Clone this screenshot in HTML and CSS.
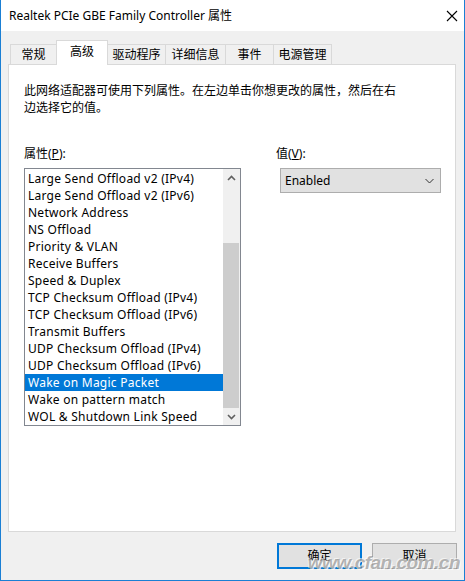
FILE: index.html
```html
<!DOCTYPE html>
<html lang="zh-CN">
<head>
<meta charset="utf-8">
<title>Realtek PCIe GBE Family Controller 属性</title>
<link rel="stylesheet" href="styles.css">
</head>
<body>
<div class="window">
  <div class="titlebar">
    <span class="title">Realtek PCIe GBE Family Controller 属性</span>
    <svg class="close" width="12" height="12" viewBox="0 0 12 12"><path d="M1 1 L11 11 M11 1 L1 11" stroke="#000" stroke-width="1.1" fill="none"/></svg>
  </div>
  <div class="body">
    <div class="tabs">
      <div class="tab w1">常规</div>
      <div class="tab w2 active">高级</div>
      <div class="tab w3">驱动程序</div>
      <div class="tab w4">详细信息</div>
      <div class="tab w5">事件</div>
      <div class="tab w6">电源管理</div>
    </div>
    <div class="panel">
      <p class="desc">此网络适配器可使用下列属性。在左边单击你想更改的属性，然后在右<br>边选择它的值。</p>
      <div class="cols">
        <div class="col-left">
          <div class="label">属性(<u>P</u>):</div>
          <div class="listbox">
            <ul class="items">
              <li>Large Send Offload v2 (IPv4)</li>
              <li>Large Send Offload v2 (IPv6)</li>
              <li>Network Address</li>
              <li>NS Offload</li>
              <li>Priority &amp; VLAN</li>
              <li>Receive Buffers</li>
              <li>Speed &amp; Duplex</li>
              <li>TCP Checksum Offload (IPv4)</li>
              <li>TCP Checksum Offload (IPv6)</li>
              <li>Transmit Buffers</li>
              <li>UDP Checksum Offload (IPv4)</li>
              <li>UDP Checksum Offload (IPv6)</li>
              <li class="sel">Wake on Magic Packet</li>
              <li>Wake on pattern match</li>
              <li>WOL &amp; Shutdown Link Speed</li>
            </ul>
            <div class="scrollbar">
              <div class="arrow">
                <svg width="9" height="6" viewBox="0 0 9 6"><path d="M1 5 L4.5 1.5 L8 5" stroke="#606060" stroke-width="1.6" fill="none"/></svg>
              </div>
              <div class="track">
                <div class="thumb"></div>
              </div>
              <div class="arrow">
                <svg width="9" height="6" viewBox="0 0 9 6"><path d="M1 1 L4.5 4.5 L8 1" stroke="#606060" stroke-width="1.6" fill="none"/></svg>
              </div>
            </div>
          </div>
        </div>
        <div class="col-right">
          <div class="label">值(<u>V</u>):</div>
          <div class="select">
            <span>Enabled</span>
            <svg width="9" height="6" viewBox="0 0 9 6"><path d="M0.5 1 L4.5 5 L8.5 1" stroke="#333" stroke-width="1" fill="none"/></svg>
          </div>
        </div>
      </div>
    </div>
    <div class="buttons">
      <div class="btn default">确定</div>
      <div class="btn">取消</div>
    </div>
    <div class="watermark">www.cfan.com.cn</div>
  </div>
</div>
</body>
</html>
```

FILE: styles.css
```css
* { box-sizing: border-box; }
html, body { margin: 0; padding: 0; }
body {
  width: 465px;
  height: 581px;
  background: #fff;
  font-family: "Noto Sans", "Noto Sans CJK SC", sans-serif;
  font-size: 12px;
  color: #000;
  overflow: hidden;
}
.window {
  width: 465px;
  height: 581px;
  display: flex;
  flex-direction: column;
  border: 1px solid #1a7fd4;
  border-top: none;
}
.titlebar {
  height: 31px;
  flex: none;
  background: #fff;
  display: flex;
  align-items: center;
  justify-content: space-between;
  padding: 0 6px 0 8px;
}
.title {
  font-size: 12px;
  line-height: 16px;
}
.close { margin-top: 1px; }
.body {
  flex: 1;
  background: #f0f0f0;
  display: flex;
  flex-direction: column;
  padding: 0 8px 0 7px;
  position: relative;
}
.tabs {
  display: flex;
  align-items: flex-end;
  margin-top: 9px;
  padding-left: 2px;
  height: 24px;
}
.tab {
  height: 20px;
  border: 1px solid #d9d9d9;
  border-bottom: none;
  margin-right: -1px;
  background: #f0f0f0;
  display: flex;
  align-items: center;
  justify-content: center;
  line-height: 16px;
  padding-top: 1px;
}
.tab.active {
  height: 25px;
  margin-bottom: -1px;
  background: #fff;
  position: relative;
  z-index: 1;
  padding-top: 0;
  padding-bottom: 3px;
}
.w1 { width: 47px; }
.w2 { width: 52px; }
.w3 { width: 59px; }
.w4 { width: 61px; }
.w5 { width: 49px; }
.w6 { width: 59px; }
.panel {
  width: 448px;
  height: 468px;
  background: #fff;
  border: 1px solid #d9d9d9;
  padding: 17px 15px 0 15px;
}
.desc {
  margin: 0;
  line-height: 17px;
  white-space: nowrap;
}
.cols {
  display: flex;
  margin-top: 29px;
}
.col-left { width: 217px; }
.col-right {
  margin-left: 35px;
}
.label {
  line-height: 17px;
  height: 17px;
  margin-bottom: 6px;
}
.label u { text-decoration-thickness: 1px; }
.listbox {
  width: 217px;
  height: 258px;
  border: 1px solid #828790;
  display: flex;
}
.items {
  list-style: none;
  margin: 0;
  padding: 1px 0 0 0;
  width: 198px;
}
.items li {
  height: 17px;
  line-height: 17px;
  padding-left: 3px;
  white-space: nowrap;
  letter-spacing: 0.25px;
}
.items li.sel {
  background: #0078d7;
  color: #fff;
}
.scrollbar {
  width: 17px;
  display: flex;
  flex-direction: column;
  background: #f0f0f0;
}
.arrow {
  height: 17px;
  display: flex;
  align-items: center;
  justify-content: center;
}
.track {
  flex: 1;
  display: flex;
  flex-direction: column;
  justify-content: flex-end;
}
.thumb {
  height: 165px;
  background: #cdcdcd;
  margin-right: 1px;
}
.select {
  margin-left: 4px;
  width: 161px;
  height: 25px;
  background: #e1e1e1;
  border: 1px solid #adadad;
  display: flex;
  align-items: center;
  justify-content: space-between;
  padding: 0 6px 0 4px;
}
.buttons {
  display: flex;
  justify-content: flex-end;
  gap: 10px;
  margin-top: 11px;
  margin-right: -1px;
}
.btn {
  width: 85px;
  height: 26px;
  background: #e1e1e1;
  border: 1px solid #adadad;
  display: flex;
  align-items: center;
  justify-content: center;
  line-height: 16px;
}
.btn.default {
  border: 2px solid #0078d7;
}
.watermark {
  position: absolute;
  right: 4px;
  bottom: 6px;
  font-family: "Liberation Sans", Arial, sans-serif;
  font-weight: bold;
  font-style: italic;
  font-size: 19px;
  letter-spacing: -0.5px;
  color: rgba(120, 120, 120, 0.55);
  text-shadow: 1px 1px 0 rgba(255,255,255,0.8), -1px -1px 0 rgba(255,255,255,0.6);
  pointer-events: none;
}
```
